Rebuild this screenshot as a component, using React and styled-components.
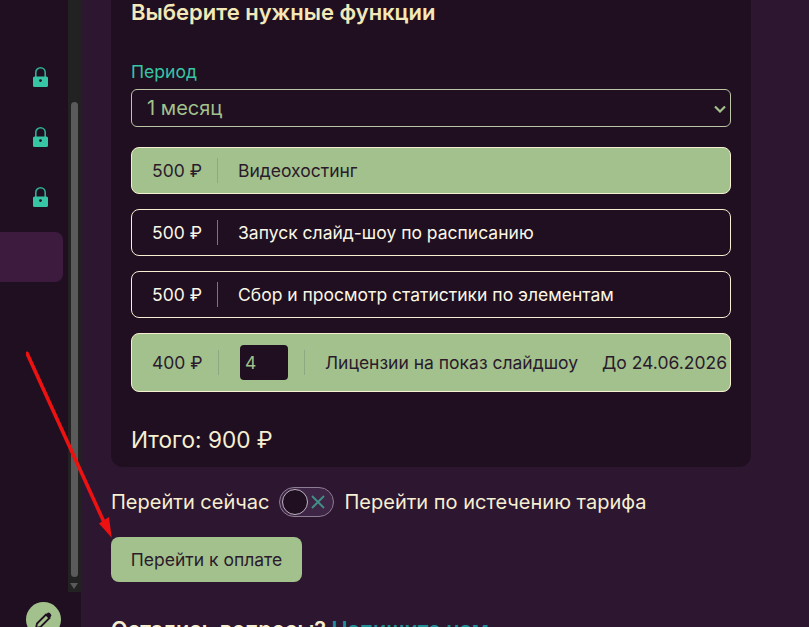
import styled, { createGlobalStyle } from 'styled-components'

const dark = '#1f0f20'
const plum = '#2d1630'
const green = '#a2c18c'
const cream = '#f6efd2'
const teal = '#36c5a5'

const features = [
  { price: '500 ₽', title: 'Видеохостинг', active: true },
  { price: '500 ₽', title: 'Запуск слайд-шоу по расписанию' },
  { price: '500 ₽', title: 'Сбор и просмотр статистики по элементам' },
]

function LockIcon() {
  return (
    <svg width="15" height="20" viewBox="0 0 15 20">
      <path d="M2.8 11V5.5a4.7 4.7 0 0 1 9.4 0V11" fill="none" stroke="#2fae95" strokeWidth="1.6" />
      <path
        fillRule="evenodd"
        d="M1.5 9.5h12A1.5 1.5 0 0 1 15 11v7.5a1.5 1.5 0 0 1-1.5 1.5h-12A1.5 1.5 0 0 1 0 18.5V11a1.5 1.5 0 0 1 1.5-1.5zM7.5 12.2a1.4 1.4 0 1 0 0 2.8a1.4 1.4 0 0 0 0-2.8z"
        fill={teal}
      />
    </svg>
  )
}

export default function App() {
  return (
    <Page>
      <GlobalStyle />
      <Sidebar>
        <Nav>
          {[0, 1, 2].map((i) => (
            <NavItem key={i}>
              <LockIcon />
            </NavItem>
          ))}
          <NavItem $active />
          <Avatar>
            <svg width="20" height="20" viewBox="0 0 20 20">
              <path d="M2 18l1-4.5L12 4.5l3.5 3.5L6.5 17z" fill="none" stroke={dark} strokeWidth="1.8" />
              <path d="M13 3.5a2 2 0 0 1 3-.2l.7.7a2 2 0 0 1-.2 3L15.5 8 12 4.5z" fill={dark} />
            </svg>
          </Avatar>
        </Nav>
        <ScrollTrack>
          <ScrollThumb />
          <ScrollArrow />
        </ScrollTrack>
      </Sidebar>

      <Main>
        <Panel>
          <Title>Выберите нужные функции</Title>
          <FieldLabel htmlFor="period">Период</FieldLabel>
          <SelectWrap>
            <PeriodSelect id="period" defaultValue="1">
              <option value="1">1 месяц</option>
              <option value="3">3 месяца</option>
            </PeriodSelect>
            <Chevron width="12" height="8" viewBox="0 0 12 8">
              <path d="M1 1.5l5 5 5-5" fill="none" stroke={green} strokeWidth="2.2" />
            </Chevron>
          </SelectWrap>
          <Rows>
            {features.map((f) => (
              <Row key={f.title} $active={f.active}>
                <Price>{f.price}</Price>
                <Divider $active={f.active} />
                <RowTitle>{f.title}</RowTitle>
              </Row>
            ))}
            <LicenseRow $active>
              <LicensePrice>400 ₽</LicensePrice>
              <Divider $active />
              <CountInput defaultValue="4" />
              <Divider $active />
              <LicenseTitle>Лицензии на показ слайдшоу</LicenseTitle>
              <Until>До 24.06.2026</Until>
            </LicenseRow>
          </Rows>
          <Total>Итого: 900 ₽</Total>
        </Panel>

        <SwitchRow>
          <span>Перейти сейчас</span>
          <Switch>
            <Knob />
            <svg width="16" height="16" viewBox="0 0 16 16">
              <path d="M2 2l12 12M14 2L2 14" stroke="#3f9288" strokeWidth="1.8" fill="none" />
            </svg>
          </Switch>
          <span>Перейти по истечению тарифа</span>
        </SwitchRow>
        <PayButton>Перейти к оплате</PayButton>
        <Question>
          Остались вопросы? <QuestionLink>Напишите нам</QuestionLink>
        </Question>
      </Main>

      <Annotation width="140" height="200" viewBox="0 0 140 200">
        <path d="M1 2.3L77.5 170" stroke="#ee1111" strokeWidth="3.6" strokeLinecap="round" fill="none" />
        <path d="M73 172.5L83 166L85.7 186.7z" fill="#ee1111" />
      </Annotation>
    </Page>
  )
}

const GlobalStyle = createGlobalStyle`
  html, body {
    margin: 0;
    height: 100%;
    overflow: hidden;
    background: ${plum};
    font-family: Inter, "Noto Sans", sans-serif;
  }
`

const Page = styled.div`
  position: relative;
  display: flex;
  height: 627px;
  overflow: hidden;
`

const Sidebar = styled.aside`
  display: flex;
  flex: 0 0 81px;
  height: 627px;
  background: ${dark};
`

const Nav = styled.nav`
  display: flex;
  flex: 0 0 68px;
  flex-direction: column;
  gap: 10px;
  padding-top: 52px;
  box-sizing: border-box;
`

const NavItem = styled.div`
  display: flex;
  flex: 0 0 50px;
  align-items: center;
  width: 63px;
  padding-left: 33px;
  box-sizing: border-box;
  border-radius: 0 8px 8px 0;
  background: ${({ $active }) => ($active ? '#3c1b3f' : 'transparent')};
`

const Avatar = styled.div`
  display: flex;
  flex: 0 0 35px;
  align-items: center;
  justify-content: center;
  width: 35px;
  margin: 310px 0 0 26px;
  border-radius: 50%;
  background: ${green};
`

const ScrollTrack = styled.div`
  display: flex;
  flex: 0 0 13px;
  flex-direction: column;
  align-items: center;
  height: 592px;
  padding-top: 102px;
  box-sizing: border-box;
  background: #222222;
`

const ScrollThumb = styled.div`
  width: 7px;
  height: 475px;
  margin-right: 1px;
  border-radius: 4px;
  background: #5a5a5a;
`

const ScrollArrow = styled.div`
  width: 0;
  height: 0;
  margin: 6px 1px 0 0;
  border-style: solid;
  border-width: 6px 4px 0;
  border-color: #5a5a5a transparent transparent;
`

const Main = styled.main`
  flex: 1;
  padding-left: 30px;
  color: ${cream};
`

const Panel = styled.section`
  width: 640px;
  height: 467px;
  padding: 0 20px;
  box-sizing: border-box;
  border-radius: 0 0 12px 12px;
  background: ${dark};
`

const Title = styled.h2`
  margin: 0;
  font-size: 22px;
  line-height: 24px;
  font-weight: 600;
  color: #f2e8b8;
`

const FieldLabel = styled.label`
  display: block;
  margin-top: 36px;
  font-size: 17.6px;
  line-height: 24px;
  color: ${teal};
`

const SelectWrap = styled.div`
  position: relative;
  margin-top: 5px;
`

const PeriodSelect = styled.select`
  display: block;
  width: 100%;
  height: 38px;
  padding: 0 15px;
  appearance: none;
  border: 1px solid #bcc6a6;
  border-radius: 6px;
  background: ${dark};
  color: ${green};
  font-family: inherit;
  font-size: 20px;
`

const Chevron = styled.svg`
  position: absolute;
  top: 16px;
  right: 5px;
  pointer-events: none;
`

const Rows = styled.div`
  display: flex;
  flex-direction: column;
  gap: 15px;
  margin-top: 20px;
`

const Row = styled.div`
  display: flex;
  align-items: center;
  height: 47px;
  padding-left: 20px;
  box-sizing: border-box;
  border: 1px solid ${cream};
  border-radius: 8px;
  background: ${({ $active }) => ($active ? green : dark)};
  color: ${({ $active }) => ($active ? '#2a1a2c' : '#fbf7e6')};
  font-size: 17.5px;
`

const LicenseRow = styled(Row)`
  height: 59px;
  padding-right: 3px;
`

const Price = styled.span`
  flex: 0 0 49px;
  min-width: 0;
  white-space: nowrap;
`

const LicensePrice = styled(Price)`
  flex-basis: 50px;
`

const Divider = styled.span`
  flex: 0 0 1px;
  height: 25px;
  margin: 0 20px 0 16px;
  background: ${({ $active }) => ($active ? '#8ea883' : '#7c7480')};
`

const RowTitle = styled.span`
  white-space: nowrap;
`

const LicenseTitle = styled(RowTitle)`
  flex: 1;
`

const Until = styled.span`
  white-space: nowrap;
`

const CountInput = styled.input`
  width: 48px;
  height: 35px;
  margin-left: 1px;
  padding: 0 5px;
  box-sizing: border-box;
  border: 0;
  border-radius: 4px;
  background: ${dark};
  color: ${green};
  font-family: inherit;
  font-size: 17.5px;
`

const Total = styled.div`
  margin-top: 34px;
  font-size: 22.6px;
  line-height: 28px;
`

const SwitchRow = styled.div`
  display: flex;
  align-items: center;
  gap: 10px;
  margin-top: 20px;
  font-size: 20px;
  line-height: 30px;
`

const Switch = styled.div`
  display: flex;
  align-items: center;
  justify-content: flex-end;
  width: 55px;
  height: 30px;
  padding: 0 7px 0 2px;
  box-sizing: border-box;
  border: 1px solid #8d7d93;
  border-radius: 15px;
  background: #3f2545;
`

const Knob = styled.span`
  width: 24px;
  height: 24px;
  margin-right: auto;
  border: 1px solid #bdb3c0;
  border-radius: 50%;
  background: ${dark};
`

const PayButton = styled.button`
  display: block;
  width: 191px;
  height: 45px;
  margin-top: 20px;
  padding: 0;
  border: 0;
  border-radius: 8px;
  background: ${green};
  color: #2a1a2c;
  font-family: inherit;
  font-size: 17.5px;
`

const Question = styled.div`
  margin-top: 34px;
  font-size: 21.6px;
  font-weight: 600;
  white-space: nowrap;
`

const QuestionLink = styled.a`
  color: #1f8f99;
`

const Annotation = styled.svg`
  position: absolute;
  left: 26px;
  top: 351px;
`
